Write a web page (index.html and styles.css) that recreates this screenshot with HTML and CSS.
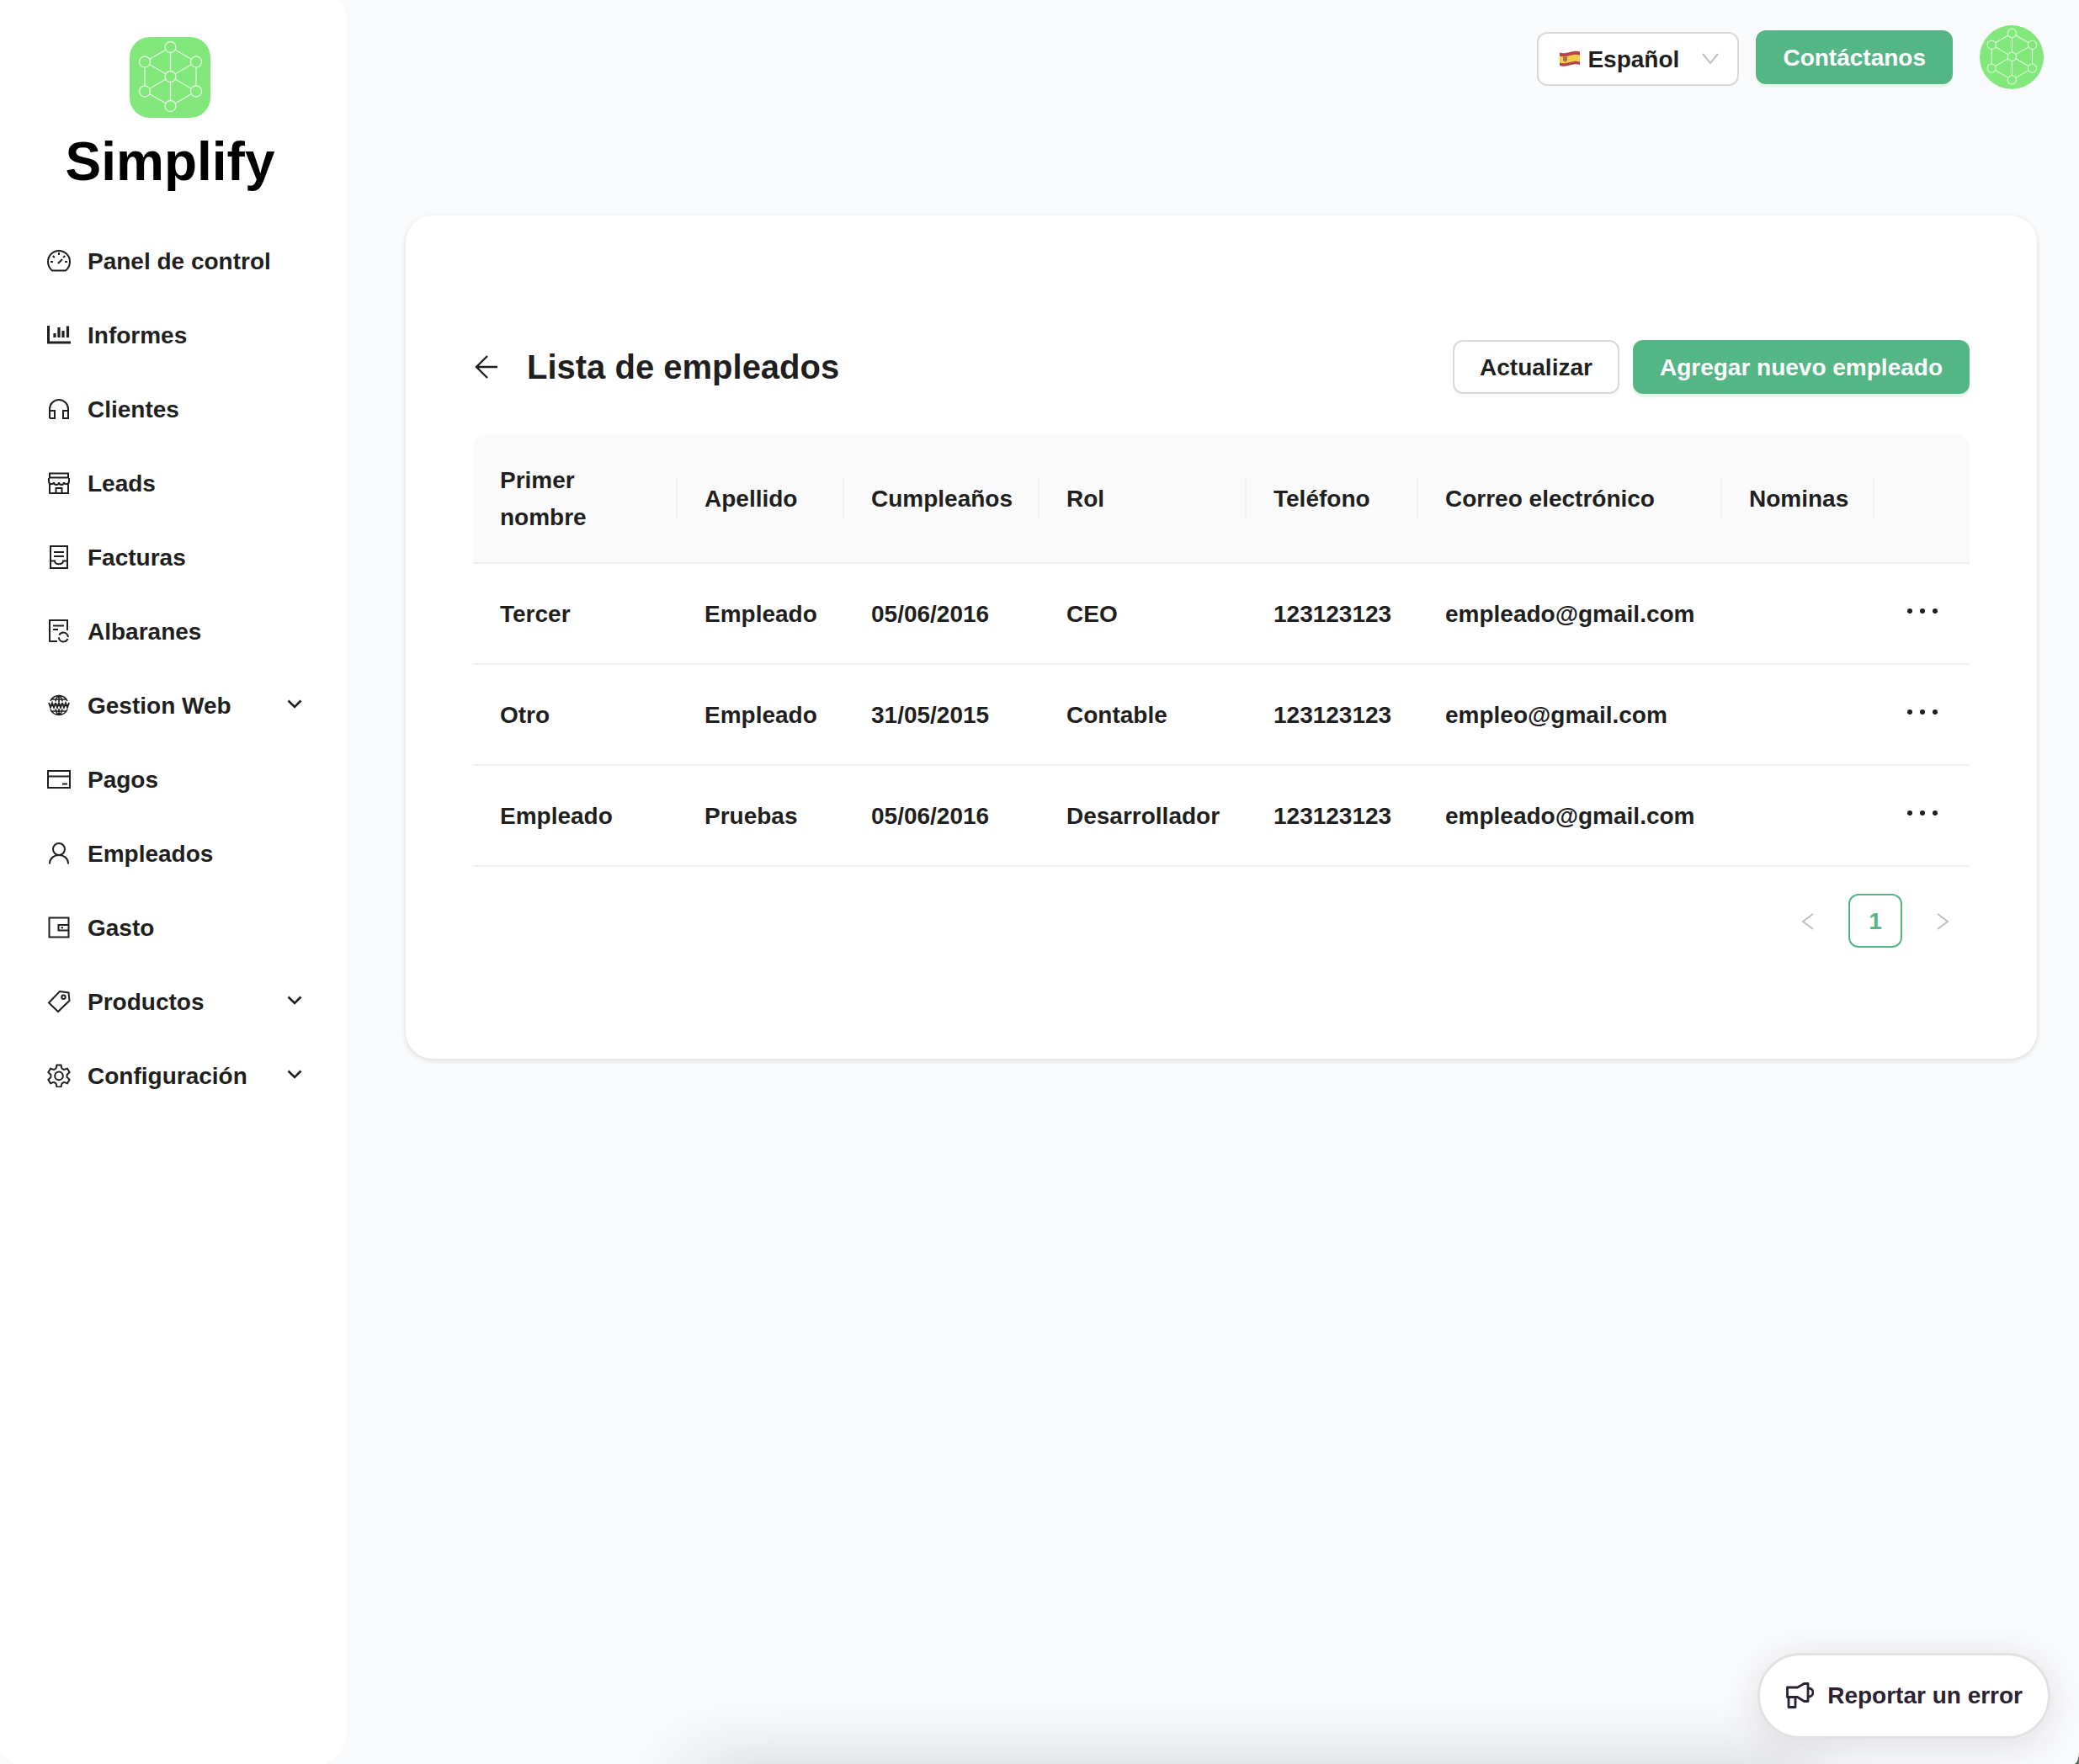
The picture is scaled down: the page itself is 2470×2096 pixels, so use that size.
FILE: index.html
```html
<!DOCTYPE html>
<html lang="es">
<head>
<meta charset="utf-8">
<title>Simplify – Lista de empleados</title>
<meta name="viewport" content="width=device-width, initial-scale=1">
<link rel="stylesheet" href="styles.css">
</head>
<body>
<svg class="sprite" aria-hidden="true">
  <symbol id="network" viewBox="0 0 96 96">
    <g fill="none" stroke="#fff" stroke-opacity=".75" stroke-width="1.3">
      <circle cx="48.500" cy="12" r="6.500"/><circle cx="48.500" cy="47" r="6.500"/><circle cx="48.500" cy="82" r="6.500"/>
      <circle cx="18" cy="29.500" r="6.500"/><circle cx="79" cy="29.500" r="6.500"/>
      <circle cx="18" cy="64.500" r="6.500"/><circle cx="79" cy="64.500" r="6.500"/>
      <path d="M48.500 18.500v22M48.500 53.500v22M18 36v22M79 36v22M42.800 15.200l-19 11M54.200 15.200l19 11M42.800 78.800l-19-11M54.200 78.800l19-11M23.800 32.800l19 11M73.200 32.800l-19 11M23.800 61.200l19-11M73.200 61.200l-19-11"/>
    </g>
  </symbol>
  <symbol id="chevron" viewBox="0 0 20 20"><path d="M2.500 4.500l7.500 7.500 7.500-7.500" fill="none" stroke="currentColor" stroke-width="2.600"/></symbol>
  <symbol id="dots" viewBox="0 0 46 28"><g fill="currentColor"><circle cx="10" cy="14" r="3"/><circle cx="25" cy="14" r="3"/><circle cx="40" cy="14" r="3"/></g></symbol>
</svg>
<div class="shell">
  <aside class="sidebar">
    <a class="brand" href="#">
      <svg class="brand-mark"><use href="#network"/></svg>
      <span class="brand-name">Simplify</span>
    </a>
    <nav>
      <ul class="menu">
        <li><a class="item" href="#">
          <svg class="icon" viewBox="0 0 28 28"><path d="M6 25.500C3 23 1 19.500 1 15a13 13 0 0 1 26 0c0 4.500-2 8-5 10.500z"/><path d="M14 4v3M4 15h3M21 15h3M6.800 8l2 2M21.200 8l-2 2M13 17l5-5"/></svg>
          <span>Panel de control</span></a></li>
        <li><a class="item" href="#">
          <svg class="icon" viewBox="0 0 28 28"><path d="M1.500 3v20h26.500" stroke-width="3"/><path d="M9 12v5M14 5v12M19 9v8M24.500 3.500v13.500" stroke-width="3.200"/></svg>
          <span>Informes</span></a></li>
        <li><a class="item" href="#">
          <svg class="icon" viewBox="0 0 28 28"><path d="M3 25V14a11 11 0 0 1 22 0v11h-6v-9h6M3 16h6v9H3"/></svg>
          <span>Clientes</span></a></li>
        <li><a class="item" href="#">
          <svg class="icon" viewBox="0 0 28 28"><path d="M3 2.500h22v5H3zM2 8v4c0 4 6 4 6 1 0 4 6 4 6 0 0 4 6 4 6 0 0 3 6 3 6-1V8M3 15v11h22V15M10.500 26v-6h7v6"/></svg>
          <span>Leads</span></a></li>
        <li><a class="item" href="#">
          <svg class="icon" viewBox="0 0 28 28"><path d="M4 1h20v26H4zM8 8h12M8 13h12M4 18.500h5c0 5 10 5 10 0h5"/></svg>
          <span>Facturas</span></a></li>
        <li><a class="item" href="#">
          <svg class="icon" viewBox="0 0 28 28"><path d="M12 26H3V1h21v12M7 7.500h13M7 12h6"/><circle cx="19.300" cy="21" r="5.500" stroke-dasharray="14.500 2.780" stroke-dashoffset="-2"/></svg>
          <span>Albaranes</span></a></li>
        <li><a class="item" href="#">
          <svg class="icon" viewBox="0 0 28 28"><path d="M4 9a11 11 0 0 1 20 0M4 19a11 11 0 0 0 20 0M6 7h16M6 21h16M14 3v7M14 18v7M10 9.500c.5-3.500 2-6 4-6s3.500 2.500 4 6M10 18.500c.5 3.500 2 6 4 6s3.500-2.500 4-6" stroke-width="1.600"/><path d="M2 11l2 5.500 2-5 2 5 2-5.500M10 11l2 5.500 2-5 2 5 2-5.500M18 11l2 5.500 2-5 2 5 2-5.500" stroke-width="2"/></svg>
          <span>Gestion Web</span><svg class="chevron"><use href="#chevron"/></svg></a></li>
        <li><a class="item" href="#">
          <svg class="icon" viewBox="0 0 28 28"><path d="M1 4h26v20H1zM1 10.500h26M18 19.500h6"/></svg>
          <span>Pagos</span></a></li>
        <li><a class="item" href="#">
          <svg class="icon" viewBox="0 0 28 28"><circle cx="14" cy="9" r="7"/><path d="M3 26.500c0-14 22-14 22 0"/></svg>
          <span>Empleados</span></a></li>
        <li><a class="item" href="#">
          <svg class="icon" viewBox="0 0 28 28"><path d="M2.500 2.500h23v23h-23zM25.500 11h-12v6.500h12M16.500 14.200h2.500"/></svg>
          <span>Gasto</span></a></li>
        <li><a class="item" href="#">
          <svg class="icon" viewBox="0 0 28 28"><path d="M2 15.500L15 2l10.500 1.500L26.500 13 13 26z"/><circle cx="19.500" cy="8.800" r="2.200"/></svg>
          <span>Productos</span><svg class="chevron"><use href="#chevron"/></svg></a></li>
        <li><a class="item" href="#">
          <svg class="icon" viewBox="0 0 28 28"><path d="M11.500 1.500h5l1 4 2.500 1.500 4-1.300 2.600 4.400-3 2.900v2.900l3 2.900-2.600 4.400-4-1.300-2.500 1.500-1 4h-5l-1-4L8 21.900l-4 1.300-2.600-4.400 3-2.900V13l-3-2.900L4 5.700 8 7l2.500-1.500z"/><circle cx="14" cy="14.400" r="4.800"/></svg>
          <span>Configuración</span><svg class="chevron"><use href="#chevron"/></svg></a></li>
      </ul>
    </nav>
  </aside>
  <div class="content">
    <header class="topbar">
      <div class="language">
        <svg class="flag" viewBox="0 0 26 20"><path d="M1 2.500c4 1.500 8 .5 12-.5s8-2 12-.5v15.500c-4-1.500-8-.5-12 .5s-8 2-12 .5z" fill="#b5444a"/><path d="M1 6.500c4 1.500 8 .5 12-.5s8-2 12-.5v8c-4-1.500-8-.5-12 .5s-8 2-12 .5z" fill="#f3cc4b"/><path d="M5 7.500h5v4L7.500 14 5 11.500z" fill="#b0704a"/></svg>
        <select class="language-select" aria-label="Idioma"><option>Español</option><option>English</option></select>
        <svg class="language-arrow" viewBox="0 0 20 16"><path d="M1 2l9 11 9-11" fill="none" stroke="currentColor" stroke-width="2"/></svg>
      </div>
      <button class="button primary" type="button">Contáctanos</button>
      <button class="avatar" type="button" aria-label="Perfil"><svg><use href="#network"/></svg></button>
    </header>
    <main class="card">
      <div class="card-head">
        <button class="back" type="button" aria-label="Volver"><svg viewBox="0 0 32 32"><path d="M29 16H4M17 3L4 16l13 13" fill="none" stroke="currentColor" stroke-width="2.400"/></svg></button>
        <h1>Lista de empleados</h1>
        <div class="actions">
          <button class="button" type="button">Actualizar</button>
          <button class="button primary" type="button">Agregar nuevo empleado</button>
        </div>
      </div>
      <table class="employees">
        <colgroup><col class="c-first"><col class="c-last"><col class="c-birth"><col class="c-role"><col class="c-phone"><col class="c-mail"><col class="c-pay"><col></colgroup>
        <thead>
          <tr><th scope="col"><span class="two-line">Primer nombre</span></th><th scope="col">Apellido</th><th scope="col">Cumpleaños</th><th scope="col">Rol</th><th scope="col">Teléfono</th><th scope="col">Correo electrónico</th><th scope="col">Nominas</th><td></td></tr>
        </thead>
        <tbody>
          <tr><td>Tercer</td><td>Empleado</td><td>05/06/2016</td><td>CEO</td><td>123123123</td><td>empleado@gmail.com</td><td></td><td><button class="more" type="button" aria-label="Acciones"><svg><use href="#dots"/></svg></button></td></tr>
          <tr><td>Otro</td><td>Empleado</td><td>31/05/2015</td><td>Contable</td><td>123123123</td><td>empleo@gmail.com</td><td></td><td><button class="more" type="button" aria-label="Acciones"><svg><use href="#dots"/></svg></button></td></tr>
          <tr><td>Empleado</td><td>Pruebas</td><td>05/06/2016</td><td>Desarrollador</td><td>123123123</td><td>empleado@gmail.com</td><td></td><td><button class="more" type="button" aria-label="Acciones"><svg><use href="#dots"/></svg></button></td></tr>
        </tbody>
      </table>
      <nav class="pager" aria-label="Paginación">
        <button class="page-step" type="button" aria-label="Anterior" disabled><svg viewBox="0 0 16 20"><path d="M14 1L2 10l12 9" fill="none" stroke="currentColor" stroke-width="2"/></svg></button>
        <button class="page" type="button" aria-current="page">1</button>
        <button class="page-step" type="button" aria-label="Siguiente" disabled><svg viewBox="0 0 16 20"><path d="M2 1l12 9-12 9" fill="none" stroke="currentColor" stroke-width="2"/></svg></button>
      </nav>
    </main>
  </div>
  <div class="bottom-shade"></div>
  <button class="report" type="button">
    <svg viewBox="0 0 34 34"><g fill="none" stroke="currentColor" stroke-width="2.800" stroke-linejoin="round"><path d="M2.500 7h12l8-4.500H27v21h-4.500l-8-5h-12zM4 18.500h8v12H4z"/><path d="M28 8a5 5 0 0 1 0 10"/></g></svg>
    <span>Reportar un error</span>
  </button>
</div>
</body>
</html>
```

FILE: styles.css
```css
* { box-sizing: border-box; }

body {
  margin: 0;
  background: #4c6a50;
  color: #1f1f1f;
  font: bold 28px/44px "Liberation Sans", Arial, sans-serif;
}

button, select { font: inherit; color: inherit; }
button { cursor: pointer; }
a { color: inherit; text-decoration: none; }
svg { display: block; }
.sprite { position: absolute; width: 0; height: 0; }

.shell {
  position: relative;
  display: flex;
  min-height: 100vh;
  overflow: hidden;
  background: #f9fafc;
  border-bottom-right-radius: 6px 14px;
}

/* Sidebar */
.sidebar {
  flex: 0 0 419px;
  margin: -14px 0 -2px -7px;
  padding: 58px 0 40px 7px;
  background: #fff;
  border-radius: 40px;
}
.brand {
  display: flex;
  flex-direction: column;
  align-items: center;
  padding-right: 8px;
  color: #000;
}
.brand-mark {
  width: 96px;
  height: 96px;
  border-radius: 24px;
  background: #82e87c;
}
.brand-name { margin-top: 16px; font-size: 64px; line-height: 72px; }

.menu { list-style: none; margin: 38px 0 0; padding: 0; }
.item {
  display: flex;
  align-items: center;
  height: 88px;
  padding: 0 52px 0 56px;
}
.item span { margin-left: 20px; padding-top: 2px; white-space: nowrap; }
.icon {
  width: 28px;
  height: 28px;
  fill: none;
  stroke: currentColor;
  stroke-width: 2;
}
.chevron { width: 20px; height: 20px; margin-left: auto; }

/* Top bar */
.content { flex: 1; min-width: 0; padding: 30px 42px 0 70px; }
.topbar {
  display: flex;
  justify-content: flex-end;
  align-items: center;
  height: 76px;
}
.language {
  display: flex;
  align-items: center;
  position: relative;
  width: 240px;
  height: 64px;
  margin: 4px 20px 0 0;
  border: 2px solid #d9d9d9;
  border-radius: 12px;
  background: #fff;
}
.flag { position: absolute; left: 24px; width: 26px; height: 20px; pointer-events: none; }
.language-select {
  width: 100%;
  height: 100%;
  padding: 2px 0 0 58px;
  border: 0;
  border-radius: 12px;
  background: transparent;
  appearance: none;
}
.language-arrow {
  position: absolute;
  right: 22px;
  width: 20px;
  height: 16px;
  color: #bfbfbf;
  pointer-events: none;
}
.button {
  height: 64px;
  padding: 2px 30px 0;
  border: 2px solid #d9d9d9;
  border-radius: 12px;
  background: #fff;
  box-shadow: 0 4px 0 rgba(0, 0, 0, .02);
  white-space: nowrap;
}
.primary {
  border-color: #55b685;
  background: #55b685;
  color: #fff;
  box-shadow: 0 4px 0 #e9f8ee;
}
.avatar {
  width: 76px;
  height: 76px;
  margin-left: 32px;
  padding: 0;
  border: 0;
  border-radius: 50%;
  background: #82e87c;
}
.avatar svg { width: 76px; height: 76px; }

/* Card */
.card {
  margin: 150px 8px 0 0;
  padding: 148px 80px 132px;
  border-radius: 32px;
  background: #fff;
  box-shadow: 0 2px 6px rgba(0, 0, 0, .12);
}
.card-head { display: flex; align-items: center; }
.back { padding: 0; border: 0; background: none; }
.back svg { width: 32px; height: 32px; }
h1 { margin: 0 0 0 32px; font-size: 40px; line-height: 64px; }
.actions { display: flex; gap: 16px; margin-left: auto; }

.employees {
  width: 100%;
  margin-top: 48px;
  border-collapse: separate;
  border-spacing: 0;
  table-layout: fixed;
}
.employees th, .employees td {
  height: 120px;
  padding: 2px 32px 0;
  border-bottom: 2px solid #f0f0f0;
  text-align: left;
  white-space: nowrap;
}
.employees thead th, .employees thead td { position: relative; height: 154px; background: #fafafa; }
.employees thead th:first-child { border-top-left-radius: 16px; }
.employees thead td { border-top-right-radius: 16px; }
.employees th::after {
  content: "";
  position: absolute;
  top: 53px;
  right: 0;
  width: 2px;
  height: 46px;
  background: #f0f0f0;
}
.two-line { display: block; width: 120px; white-space: normal; }
.c-first { width: 243px; }
.c-last { width: 198px; }
.c-birth { width: 232px; }
.c-role { width: 246px; }
.c-phone { width: 204px; }
.c-mail { width: 361px; }
.c-pay { width: 181px; }
.more { display: block; margin-bottom: 8px; padding: 0; border: 0; background: none; }
.more svg { width: 46px; height: 28px; }

.pager { display: flex; justify-content: flex-end; gap: 16px; margin-top: 32px; }
.page, .page-step {
  display: flex;
  align-items: center;
  justify-content: center;
  width: 64px;
  height: 64px;
  padding: 2px 0 0;
  border: 0;
  border-radius: 12px;
  background: #fff;
}
.page { border: 2px solid #55b685; color: #55b685; }
.page-step { color: #bfbfbf; }
.page-step svg { width: 16px; height: 20px; }

/* Overlays pinned to the bottom of the window */
.bottom-shade {
  position: absolute;
  left: 820px;
  right: 320px;
  bottom: -60px;
  height: 50px;
  box-shadow: 0 0 90px rgba(0, 0, 0, .24);
}
.report {
  position: absolute;
  right: 34px;
  bottom: 30px;
  display: flex;
  align-items: center;
  gap: 16px;
  height: 102px;
  padding: 0 30px;
  border: 3px solid #e2e2e2;
  border-radius: 51px;
  background: #fff;
  color: #2b2233;
  box-shadow: 0 8px 48px rgba(43, 34, 51, .12);
}
.report svg { width: 34px; height: 34px; }
```
